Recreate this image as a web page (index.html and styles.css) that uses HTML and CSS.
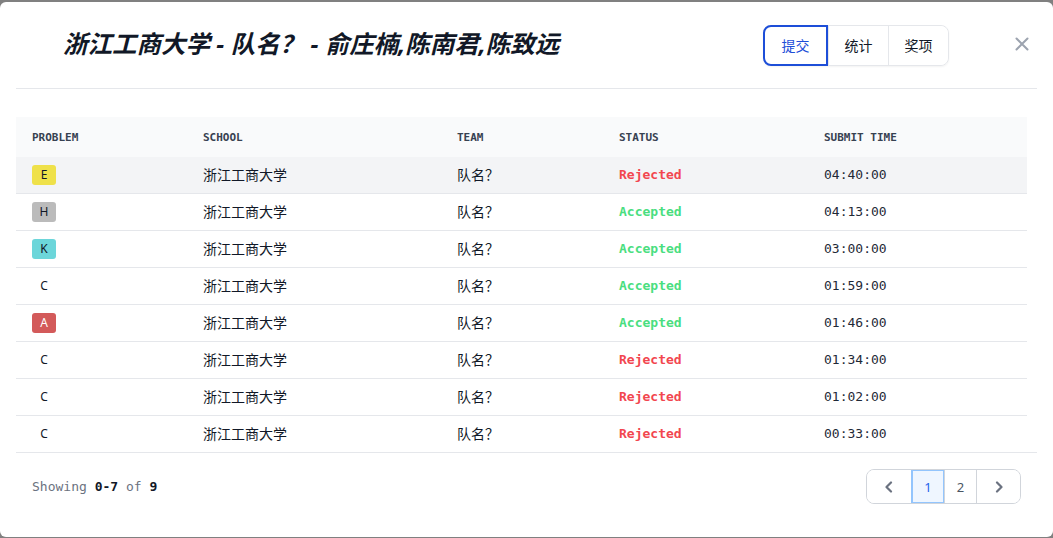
FILE: index.html
```html
<!DOCTYPE html>
<html lang="zh">
<head>
<meta charset="utf-8">
<title>提交</title>
<link rel="stylesheet" href="styles.css">
</head>
<body>
<div class="modal">
  <header class="modal-head">
    <h1 class="title">浙江工商大学 - 队名？ - 俞庄楠,陈南君,陈致远</h1>
    <div class="tabs">
      <button class="tab active">提交</button>
      <button class="tab">统计</button>
      <button class="tab">奖项</button>
    </div>
    <button class="close" aria-label="close">
      <svg width="14" height="14" viewBox="0 0 14 14"><path d="M1.5 1.5 L12.5 12.5 M12.5 1.5 L1.5 12.5" stroke="#9ca3af" stroke-width="2" stroke-linecap="round"/></svg>
    </button>
  </header>
  <div class="divider"></div>
  <div class="table-wrap">
    <table class="subs">
      <colgroup>
        <col class="c1"><col class="c2"><col class="c3"><col class="c4"><col class="c5">
      </colgroup>
      <thead>
        <tr><th>Problem</th><th>School</th><th>Team</th><th>Status</th><th>Submit Time</th></tr>
      </thead>
      <tbody>
        <tr class="hover"><td><span class="badge b-e">E</span></td><td class="cjk">浙江工商大学</td><td class="cjk">队名？</td><td class="st rej">Rejected</td><td class="tm">04:40:00</td></tr>
        <tr><td><span class="badge b-h">H</span></td><td class="cjk">浙江工商大学</td><td class="cjk">队名？</td><td class="st acc">Accepted</td><td class="tm">04:13:00</td></tr>
        <tr><td><span class="badge b-k">K</span></td><td class="cjk">浙江工商大学</td><td class="cjk">队名？</td><td class="st acc">Accepted</td><td class="tm">03:00:00</td></tr>
        <tr><td><span class="badge">C</span></td><td class="cjk">浙江工商大学</td><td class="cjk">队名？</td><td class="st acc">Accepted</td><td class="tm">01:59:00</td></tr>
        <tr><td><span class="badge b-a">A</span></td><td class="cjk">浙江工商大学</td><td class="cjk">队名？</td><td class="st acc">Accepted</td><td class="tm">01:46:00</td></tr>
        <tr><td><span class="badge">C</span></td><td class="cjk">浙江工商大学</td><td class="cjk">队名？</td><td class="st rej">Rejected</td><td class="tm">01:34:00</td></tr>
        <tr><td><span class="badge">C</span></td><td class="cjk">浙江工商大学</td><td class="cjk">队名？</td><td class="st rej">Rejected</td><td class="tm">01:02:00</td></tr>
        <tr><td><span class="badge">C</span></td><td class="cjk">浙江工商大学</td><td class="cjk">队名？</td><td class="st rej">Rejected</td><td class="tm">00:33:00</td></tr>
      </tbody>
    </table>
  </div>
  <footer class="foot">
    <div class="showing">Showing <b>0-7</b> of <b>9</b></div>
    <nav class="pager">
      <button class="pg nav"><svg width="10" height="12" viewBox="0 0 10 12"><path d="M7 1.5 L2.5 6 L7 10.5" fill="none" stroke="#6b7280" stroke-width="2.2" stroke-linecap="round" stroke-linejoin="round"/></svg></button>
      <button class="pg num active">1</button>
      <button class="pg num n2">2</button>
      <button class="pg nav"><svg width="10" height="12" viewBox="0 0 10 12"><path d="M3 1.5 L7.5 6 L3 10.5" fill="none" stroke="#6b7280" stroke-width="2.2" stroke-linecap="round" stroke-linejoin="round"/></svg></button>
    </nav>
  </footer>
</div>
</body>
</html>
```
FILE: styles.css
```css
* { box-sizing: border-box; }
html, body { margin: 0; padding: 0; }
body {
  background: #808080;
  font-family: "Noto Sans", "Noto Sans CJK SC", sans-serif;
  color: #111827;
  height: 538px;
  overflow: hidden;
}
.modal {
  margin-top: 2px;
  height: 535px;
  background: #fff;
  border-radius: 6px;
  display: flex;
  flex-direction: column;
}
.modal-head {
  height: 86px;
  display: flex;
  align-items: center;
  padding: 0 24px 0 63px;
}
.title {
  margin: 0;
  flex: 1;
  font-family: "Noto Sans", "Noto Sans CJK SC", sans-serif;
  font-size: 24.5px;
  font-weight: 700;
  font-style: italic;
  color: #111827;
  line-height: 32px;
  padding-bottom: 2px;
}
.tabs {
  display: flex;
  border: 1px solid #e5e7eb;
  border-radius: 8px;
  box-shadow: 0 1px 2px rgba(0,0,0,0.05);
  margin-top: 2px;
  margin-bottom: 2px;
  margin-right: 66px;
}
.tab {
  font-family: "Noto Sans CJK SC", sans-serif;
  font-size: 14px;
  color: #111827;
  background: #fff;
  border: 0;
  border-left: 1px solid #e5e7eb;
  height: 39px;
  width: 60px;
  padding: 0;
}
.tab:first-child { border-left: 0; border-radius: 8px 0 0 8px; }
.tab:last-child { border-radius: 0 8px 8px 0; }
.tab.active {
  width: 65px;
  margin: -1px 0 -1px -1px;
  height: 41px;
  border: 2px solid #1d4ed8;
  border-radius: 8px 0 0 8px;
  color: #1d4ed8;
}
.close {
  background: none;
  border: 0;
  padding: 0;
  width: 14px;
  height: 14px;
  display: flex;
  margin-bottom: 2px;
}
.divider {
  height: 1px;
  background: #e5e7eb;
  margin: 0 16px;
}
.table-wrap {
  margin: 28px 16px 0;
  border-bottom: 1px solid #e5e7eb;
}
.subs {
  width: 1011px;
  table-layout: fixed;
  border-collapse: collapse;
}
col.c1 { width: 171px; }
col.c2 { width: 254px; }
col.c3 { width: 162px; }
col.c4 { width: 205px; }
col.c5 { width: 219px; }
thead tr { background: #f9fafb; }
th {
  height: 40px;
  padding: 0 16px;
  text-align: left;
  font-family: "DejaVu Sans Mono", monospace;
  font-size: 11px;
  font-weight: 700;
  text-transform: uppercase;
  color: #374151;
}
tbody tr { border-top: 1px solid #e5e7eb; }
tbody tr:first-child { border-top: 0; }
tbody tr.hover { background: #f3f4f6; }
td {
  height: 37px;
  padding: 0 16px 1px;
  vertical-align: middle;
  font-size: 14px;
  color: #111827;
}
tbody tr:first-child td { height: 36px; }
.cjk { font-family: "Noto Sans CJK SC", sans-serif; }
.badge {
  display: inline-flex;
  width: 24px;
  height: 20px;
  align-items: center;
  justify-content: center;
  border-radius: 3px;
  font-family: "Noto Sans", sans-serif;
  font-size: 12px;
  color: #111827;
  vertical-align: middle;
}
.b-e { background: #efe14a; }
.b-h { background: #bbbbbb; }
.b-k { background: #6cd6da; }
.b-a { background: #d35a5a; color: #fff; }
.st {
  font-family: "DejaVu Sans Mono", monospace;
  font-size: 13px;
  font-weight: 700;
}
.rej { color: #f2464f; }
.acc { color: #4ade80; }
.tm {
  font-family: "DejaVu Sans Mono", monospace;
  font-size: 13px;
  color: #1f2937;
}
.foot {
  display: flex;
  align-items: center;
  justify-content: space-between;
  padding: 16px 32px 0 32px;
}
.showing {
  font-family: "DejaVu Sans Mono", monospace;
  font-size: 13px;
  color: #6b7280;
}
.showing b { color: #111827; font-weight: 700; }
.pager {
  display: flex;
  border: 1px solid #d1d5db;
  border-radius: 8px;
  overflow: hidden;
  height: 35px;
}
.pg {
  border: 0;
  border-left: 1px solid #d1d5db;
  background: #fff;
  padding: 0;
  display: flex;
  align-items: center;
  justify-content: center;
  font-family: "Noto Sans", sans-serif;
  font-size: 13px;
  color: #4b5563;
}
.pg:first-child { border-left: 0; }
.pg.nav { width: 44px; }
.pg.num { width: 33px; }
.pg.num.n2 { width: 32px; }
.pg.num.active {
  background: #eff6ff;
  color: #2563eb;
  box-shadow: inset 0 0 0 1px #93c5fd;
  border-left-color: #93c5fd;
}
```
